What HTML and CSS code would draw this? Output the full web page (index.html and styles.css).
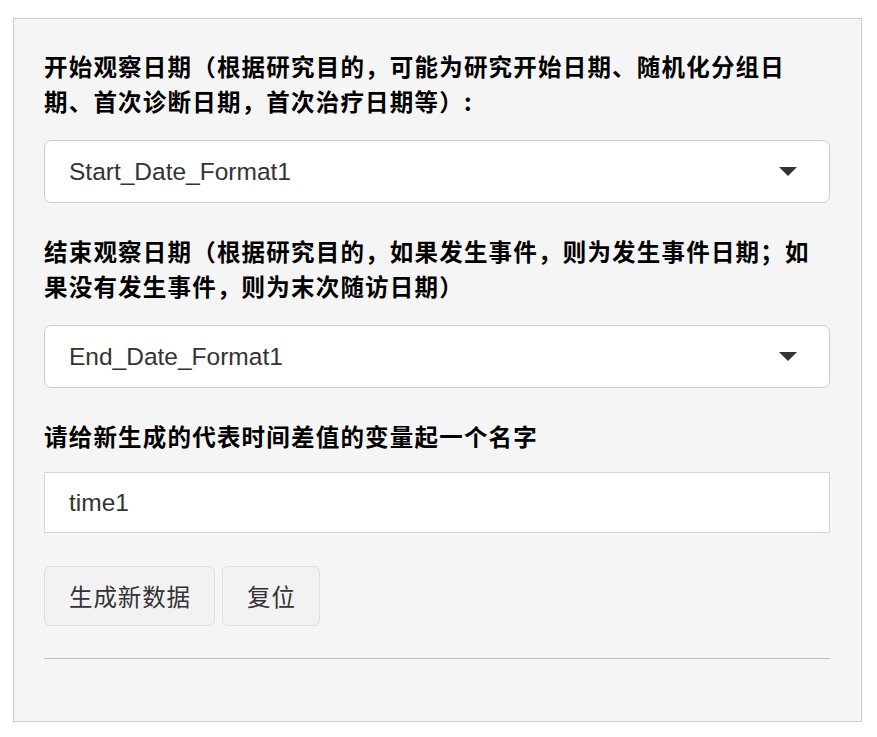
FILE: index.html
```html
<!DOCTYPE html>
<html lang="zh-CN">
<head>
<meta charset="utf-8">
<title>观察日期</title>
<link rel="stylesheet" href="styles.css">
</head>
<body>
<div class="well">
  <div class="form-group">
    <label class="cjk-label">开始观察日期（根据研究目的，可能为研究开始日期、随机化分组日期、首次诊断日期，首次治疗日期等）:</label>
    <div class="select">
      <span class="select-value">Start_Date_Format1</span>
      <span class="caret"></span>
    </div>
  </div>
  <div class="form-group">
    <label class="cjk-label">结束观察日期（根据研究目的，如果发生事件，则为发生事件日期；如果没有发生事件，则为末次随访日期）</label>
    <div class="select">
      <span class="select-value">End_Date_Format1</span>
      <span class="caret"></span>
    </div>
  </div>
  <div class="form-group">
    <label class="cjk-label label-input">请给新生成的代表时间差值的变量起一个名字</label>
    <div class="text-input">time1</div>
  </div>
  <div class="buttons">
    <button class="btn">生成新数据</button>
    <button class="btn">复位</button>
  </div>
  <hr class="rule">
</div>
</body>
</html>
```

FILE: styles.css
```css
* { box-sizing: border-box; }
html, body { margin: 0; padding: 0; background: #fff; }
body {
  font-family: "Liberation Sans", "Noto Sans CJK SC", sans-serif;
  color: #333;
}
.well {
  margin: 18px 0 0 13px;
  width: 849px;
  height: 704px;
  background: #f5f5f5;
  border: 1px solid #cccccc;
  padding: 30px 31px 30px 30px;
}
.form-group { display: flex; flex-direction: column; }
.form-group + .form-group { margin-top: 31px; }
.cjk-label {
  font-family: "Noto Sans CJK SC", sans-serif;
  font-weight: 700;
  font-size: 23.5px;
  letter-spacing: 1.2px;
  line-height: 35px;
  color: #000;
  margin-bottom: 21px;
}
.label-input { margin-bottom: 18px; }
.select {
  height: 63px;
  background: #fff;
  border: 1px solid #cccccc;
  border-radius: 7px;
  display: flex;
  align-items: center;
  justify-content: space-between;
  padding: 0 32px 0 24px;
}
.select-value, .text-input {
  font-family: "Liberation Sans", sans-serif;
  font-size: 24.5px;
  color: #333;
}
.caret {
  width: 0;
  height: 0;
  border-left: 9px solid transparent;
  border-right: 9px solid transparent;
  border-top: 9px solid #333;
}
.text-input {
  height: 61px;
  background: #fff;
  border: 1px solid #d4d4e0;
  display: flex;
  align-items: center;
  padding: 0 24px;
}
.buttons {
  display: flex;
  gap: 7px;
  margin-top: 33px;
}
.btn {
  height: 60px;
  padding: 0 23px 0 24px;
  background: #f2f2f2;
  border: 1px solid #dedede;
  border-radius: 6px;
  font-family: "Noto Sans CJK SC", sans-serif;
  font-size: 23.5px;
  letter-spacing: 0.9px;
  color: #333;
}
.rule {
  margin: 32px 0 0 0;
  border: 0;
  border-top: 1px solid #bdbdbd;
  height: 0;
}
```
